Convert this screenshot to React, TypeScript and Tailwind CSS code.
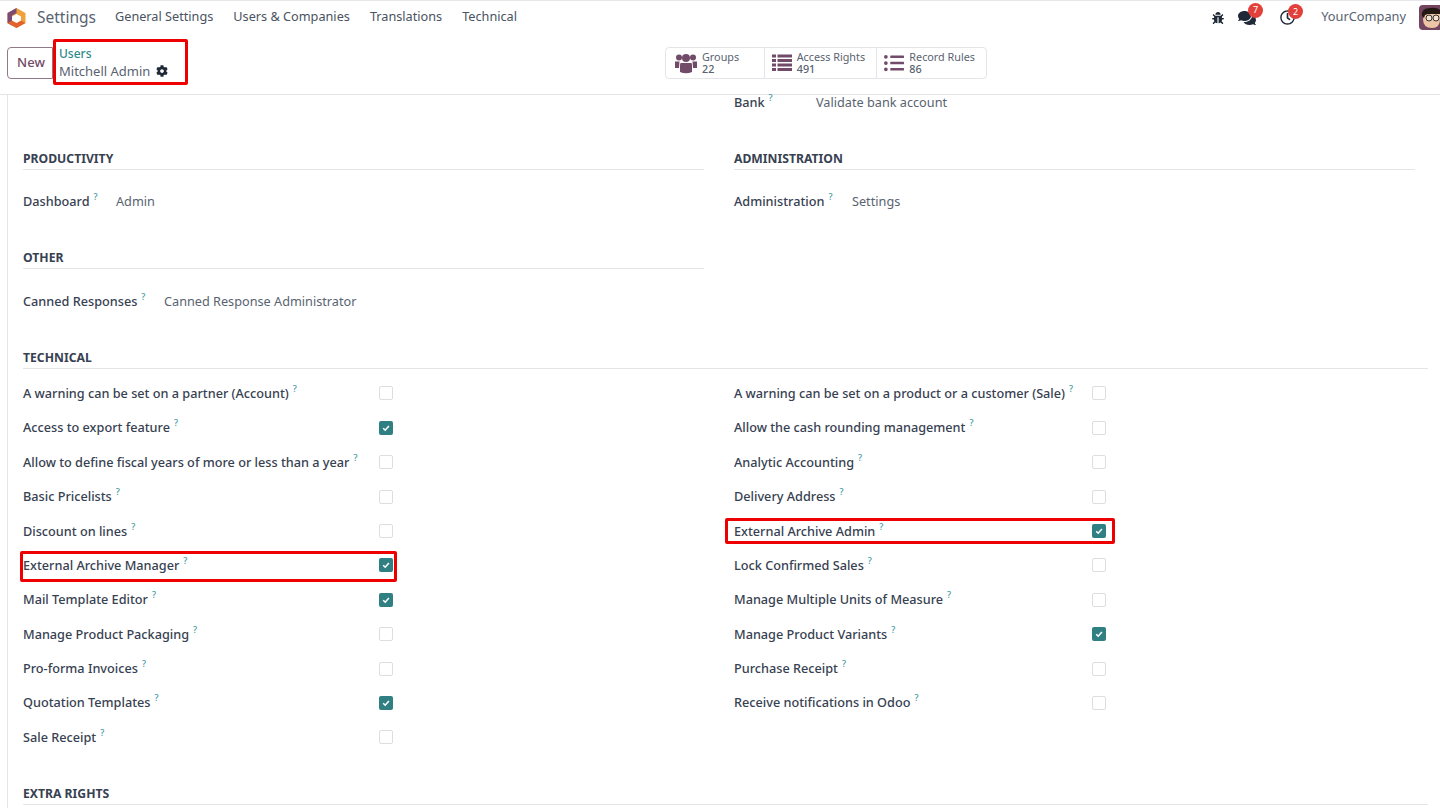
import React from "react";
import { FaBug, FaCog, FaComments, FaListUl, FaRegClock } from "react-icons/fa";

const font = { fontFamily: '"Noto Sans", sans-serif' };

const menus = ["General Settings", "Users & Companies", "Translations", "Technical"];

const leftRows: [string, boolean][] = [
  ["A warning can be set on a partner (Account)", false],
  ["Access to export feature", true],
  ["Allow to define fiscal years of more or less than a year", false],
  ["Basic Pricelists", false],
  ["Discount on lines", false],
  ["External Archive Manager", true],
  ["Mail Template Editor", true],
  ["Manage Product Packaging", false],
  ["Pro-forma Invoices", false],
  ["Quotation Templates", true],
  ["Sale Receipt", false],
];

const rightRows: [string, boolean][] = [
  ["A warning can be set on a product or a customer (Sale)", false],
  ["Allow the cash rounding management", false],
  ["Analytic Accounting", false],
  ["Delivery Address", false],
  ["External Archive Admin", true],
  ["Lock Confirmed Sales", false],
  ["Manage Multiple Units of Measure", false],
  ["Manage Product Variants", true],
  ["Purchase Receipt", false],
  ["Receive notifications in Odoo", false],
];

function Help() {
  return <sup className="ml-[4px] text-[9px] font-medium text-[#3f9aa0] -top-[6px]">?</sup>;
}

function Check({ on }: { on: boolean }) {
  if (!on) return <div className="w-[14px] h-[14px] shrink-0 rounded-[2px] border border-[#dcdee1] bg-white" />;
  return (
    <div className="w-[14px] h-[14px] shrink-0 rounded-[2px] bg-[#2f7f83] flex items-center justify-center">
      <svg width="10" height="10" viewBox="0 0 10 10" fill="none">
        <path d="M2.2 5.2 4.2 7.2 7.9 3" stroke="white" strokeWidth="1.6" />
      </svg>
    </div>
  );
}

function SectionTitle({ title }: { title: string }) {
  return (
    <div className="h-[20px] border-b border-[#e3e5e8] text-[12.2px] font-bold text-[#374151] leading-[17px]">
      {title}
    </div>
  );
}

function Row({ label, on, labelWidth, box }: { label: string; on: boolean; labelWidth: string; box?: string }) {
  return (
    <div className="relative h-[34.4px] flex items-center">
      <div className={`${labelWidth} shrink-0 text-[12.7px] font-medium text-[#374151] whitespace-nowrap`}>
        {label}
        <Help />
      </div>
      <Check on={on} />
      {box && <div className={`absolute border-[3px] border-[#ee0000] rounded-[2px] ${box}`} />}
    </div>
  );
}

function Field({ label, value, labelWidth, height = "h-[20px]" }: { label: string; value: string; labelWidth: string; height?: string }) {
  return (
    <div className={`flex items-center ${height} text-[12.7px] leading-[14px] whitespace-nowrap`}>
      <div className={`${labelWidth} shrink-0 font-medium text-[#374151]`}>
        {label}
        <Help />
      </div>
      <div className="text-[#596370]">{value}</div>
    </div>
  );
}

function StatButton({ icon, title, count, width, pad }: { icon: React.ReactNode; title: string; count: string; width: string; pad: string }) {
  return (
    <div className={`${width} ${pad} h-full flex items-center gap-[5px] border-r border-[#e3e5e8] last:border-r-0`}>
      {icon}
      <div className="text-[10.8px] leading-[12px] text-[#596370]">
        <div>{title}</div>
        <div className="font-medium">{count}</div>
      </div>
    </div>
  );
}

function GroupsIcon() {
  return (
    <svg width="22" height="21" viewBox="0 0 22 21" fill="#714b67" className="shrink-0">
      <circle cx="4" cy="4.500" r="3" />
      <circle cx="18" cy="4.500" r="3" />
      <circle cx="11" cy="5" r="4" />
      <path d="M0 8.500h4.500L4 15H0z" />
      <path d="M22 8.500h-4.500L18 15h4z" />
      <path d="M5.500 10h11l.5 2v7q-6 2.500-12 0v-7z" />
    </svg>
  );
}

function RowsIcon() {
  return (
    <svg width="20" height="18" viewBox="0 0 20 18" fill="#714b67" className="shrink-0">
      <rect x="0" y="0.500" width="4" height="3" />
      <rect x="0" y="5" width="4" height="3" />
      <rect x="0" y="9.500" width="4" height="3" />
      <rect x="0" y="14" width="4" height="3" />
      <rect x="5.500" y="0.500" width="14.500" height="3" />
      <rect x="5.500" y="5" width="14.500" height="3" />
      <rect x="5.500" y="9.500" width="14.500" height="3" />
      <rect x="5.500" y="14" width="14.500" height="3" />
    </svg>
  );
}

export default function App() {
  return (
    <div className="w-[1440px] h-[808px] overflow-hidden bg-white flex flex-col" style={font}>
      {/* Navbar */}
      <div className="h-[34px] shrink-0 border-t border-[#e5e7eb] flex items-center pl-[6px]">
        <svg width="21" height="22" viewBox="0 0 21 22" className="shrink-0">
          <path d="M10.5 1 19.500 6v10l-9 5-9-5V6z" fill="#f0a13a" />
          <path d="M10.5 1 1.5 6v10l4.500 2.500V8.500l4.500-2.500z" fill="#7c4a74" />
          <path d="M1.5 16 10.500 21l9-5-4.500-2.500-4.500 2.500-4.500-2.500z" fill="#e2622c" />
          <path d="M10.5 7 15 9.500v4l-4.500 2.500L6 13.500v-4z" fill="#ffffff" />
        </svg>
        <div className="ml-[10px] text-[15.5px] text-[#596370]">Settings</div>
        <div className="ml-[19px] flex gap-[20px] text-[12.7px] text-[#4a5361]">
          {menus.map((m) => (
            <div key={m} className="-mt-[1px]">{m}</div>
          ))}
        </div>
        <div className="ml-auto flex items-center">
          <FaBug size={12} className="text-[#1f2937]" />
          <div className="relative ml-[14px]">
            <FaComments size={18} className="text-[#1f2937]" />
            <div className="absolute -top-[6px] left-[10px] w-[15px] h-[15px] rounded-full bg-[#e2403b] text-white text-[9px] flex items-center justify-center">7</div>
          </div>
          <div className="relative ml-[24px]">
            <FaRegClock size={15} className="text-[#1f2937]" />
            <div className="absolute -top-[6px] left-[8px] w-[15px] h-[15px] rounded-full bg-[#e2403b] text-white text-[9px] flex items-center justify-center">2</div>
          </div>
          <div className="ml-[26px] text-[12.8px] text-[#596370] -mt-[1px]">YourCompany</div>
          <div className="ml-[13px] w-[21px] h-[25px] rounded-l-[4px] bg-[#74455f] overflow-hidden shrink-0">
            <svg width="21" height="25" viewBox="0 0 21 25">
              <path d="M4 14Q4 23 13 23Q21 23 21 14V8H6z" fill="#eec5a5" />
              <path d="M3 11Q2 3 11 3Q18 2 21 5V9H9L6 10 5 13z" fill="#241815" />
              <circle cx="10" cy="13" r="3" fill="#f3e3d5" stroke="#333" />
              <circle cx="17" cy="13" r="3" fill="#f3e3d5" stroke="#333" />
            </svg>
          </div>
        </div>
      </div>

      {/* Control panel */}
      <div className="relative h-[61px] shrink-0 border-b border-[#e3e5e8] flex items-center pl-[7px]">
        <div className="mt-[-2px] w-[46px] h-[32px] rounded-l-[4px] border border-[#8f7a88] flex items-center justify-center text-[13px] font-medium text-[#714b67]">
          <span className="ml-[2px]">New</span>
        </div>
        <div className="ml-[6px] mt-[-4px] text-[13px] leading-[18px]">
          <div className="pt-[2px] text-[12px] leading-[16px] font-medium text-[#2f8a8e]">Users</div>
          <div className="flex items-center text-[#596370]">
            Mitchell Admin
            <FaCog size={12} className="ml-[6px] text-[#1f2937]" />
          </div>
        </div>
        <div className="absolute left-[53px] top-[5px] w-[135px] h-[46px] border-[3px] border-[#ee0000] rounded-[2px]" />
        <div className="absolute left-[665px] top-[13px] h-[32px] w-[322px] flex border border-[#e3e5e8] rounded-[4px]">
          <StatButton width="w-[99px]" pad="pl-[9px]" title="Groups" count="22" icon={<GroupsIcon />} />
          <StatButton width="w-[113px]" pad="pl-[7px]" title="Access Rights" count="491" icon={<RowsIcon />} />
          <StatButton width="w-[109px]" pad="pl-[7px]" title="Record Rules" count="86" icon={<FaListUl size={20} className="text-[#714b67]" />} />
        </div>
      </div>

      {/* Form sheet */}
      <div className="flex-1 ml-[7px] border-l border-[#e3e5e8] pl-[15px] pr-[12px]">
        <div className="grid grid-cols-[681px_681px] gap-x-[30px] h-[254px]">
          <div className="pt-[55px]">
            <SectionTitle title="PRODUCTIVITY" />
            <div className="mt-[21px]">
              <Field label="Dashboard" value="Admin" labelWidth="w-[93px]" />
            </div>
            <div className="mt-[38px]">
              <SectionTitle title="OTHER" />
            </div>
            <div className="mt-[22px]">
              <Field label="Canned Responses" value="Canned Response Administrator" labelWidth="w-[141px]" />
            </div>
          </div>
          <div>
            <Field label="Bank" value="Validate bank account" labelWidth="w-[82px]" height="h-[14px]" />
            <div className="mt-[41px]">
              <SectionTitle title="ADMINISTRATION" />
            </div>
            <div className="mt-[21px]">
              <Field label="Administration" value="Settings" labelWidth="w-[118px]" />
            </div>
          </div>
        </div>

        <SectionTitle title="TECHNICAL" />
        <div className="grid grid-cols-[681px_681px] gap-x-[30px] pt-[7.3px]">
          <div>
            {leftRows.map(([label, on]) => (
              <Row
                key={label}
                label={label}
                on={on}
                labelWidth="w-[356px]"
                box={label === "External Archive Manager" ? "-left-[3px] right-[307px] top-[3px] bottom-[1px]" : undefined}
              />
            ))}
          </div>
          <div>
            {rightRows.map(([label, on]) => (
              <Row
                key={label}
                label={label}
                on={on}
                labelWidth="w-[358px]"
                box={label === "External Archive Admin" ? "-left-[9px] right-[300px] top-[4px] bottom-[4px]" : undefined}
              />
            ))}
          </div>
        </div>

        <div className="mt-[30.7px]">
          <SectionTitle title="EXTRA RIGHTS" />
        </div>
      </div>
    </div>
  );
}
